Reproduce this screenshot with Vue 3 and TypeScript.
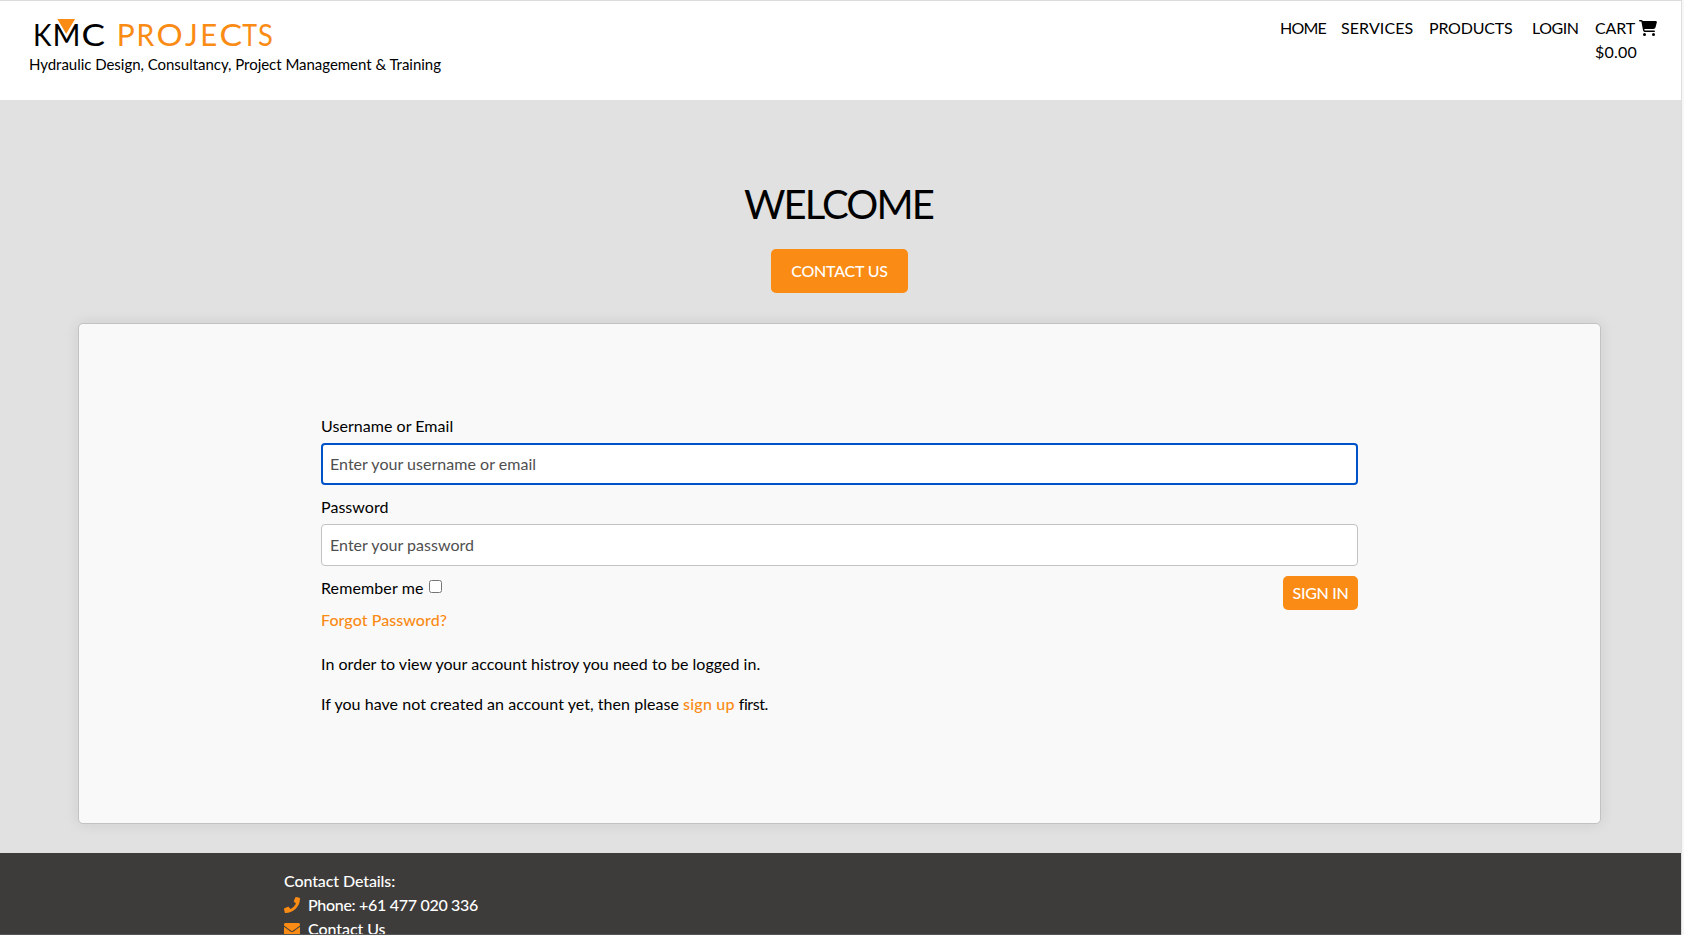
<script setup lang="ts">
import { ref } from 'vue'

interface NavItem {
  label: string
  cls: string
}

interface LogoLetter {
  char: string
  x: number
  width: number
  tone: 'dark' | 'accent'
}

const navItems: NavItem[] = [
  { label: 'HOME', cls: 'home' },
  { label: 'SERVICES', cls: 'services' },
  { label: 'PRODUCTS', cls: 'products' },
  { label: 'LOGIN', cls: 'login' },
]

const logoLetters: LogoLetter[] = [
  { char: 'K', x: 3.9, width: 18.5, tone: 'dark' },
  { char: 'M', x: 23.4, width: 28, tone: 'dark' },
  { char: 'C', x: 52.4, width: 23.5, tone: 'dark' },
  { char: 'P', x: 87.8, width: 18, tone: 'accent' },
  { char: 'R', x: 107.6, width: 17.8, tone: 'accent' },
  { char: 'O', x: 127.6, width: 26.2, tone: 'accent' },
  { char: 'J', x: 156, width: 12.8, tone: 'accent' },
  { char: 'E', x: 171.3, width: 17, tone: 'accent' },
  { char: 'C', x: 190.6, width: 22.600, tone: 'accent' },
  { char: 'T', x: 213.3, width: 14.800, tone: 'accent' },
  { char: 'S', x: 229, width: 14.800, tone: 'accent' },
]

const username = ref('')
const password = ref('')
const remember = ref(false)
</script>

<template>
  <div class="page">
    <header class="header">
      <div class="brand">
        <svg class="logo" width="250" height="34" viewBox="0 0 250 34">
          <text
            v-for="(l, i) in logoLetters"
            :key="i"
            class="logo-text"
            :class="l.tone"
            :x="l.x"
            y="29"
            :textLength="l.width"
            lengthAdjust="spacingAndGlyphs"
          >{{ l.char }}</text>
          <path class="marker" d="M26.900 1.200h20.600L37.200 18.500z" />
        </svg>
        <div class="tagline">Hydraulic Design, Consultancy, Project Management &amp; Training</div>
      </div>
      <nav class="nav">
        <a v-for="item in navItems" :key="item.label" :class="item.cls">{{ item.label }}</a>
        <a class="cart">
          <span class="cart-row">
            <span class="cart-label">CART</span>
            <svg class="cart-icon" viewBox="0 0 576 512" width="18" height="16">
              <path d="M0 24C0 10.700 10.700 0 24 0H69.500c22 0 41.500 12.800 50.600 32h411c26.300 0 45.500 25 38.600 50.400l-41 152.300c-8.500 31.400-37 53.300-69.500 53.300H170.700l5.400 28.500c2.200 11.300 12.100 19.500 23.600 19.500H488c13.300 0 24 10.700 24 24s-10.700 24-24 24H199.700c-34.600 0-64.300-24.600-70.700-58.500L77.400 54.500c-.7-3.800-4-6.500-7.900-6.500H24C10.700 48 0 37.300 0 24zM128 464a48 48 0 1 1 96 0 48 48 0 1 1-96 0zm336-48a48 48 0 1 1 0 96 48 48 0 1 1 0-96z" />
            </svg>
          </span>
          <span>$0.00</span>
        </a>
      </nav>
    </header>

    <main class="main">
      <h1>WELCOME</h1>
      <button class="btn contact" type="button">CONTACT US</button>

      <section class="card">
        <form class="form" @submit.prevent>
          <label class="label" for="username">Username or Email</label>
          <input id="username" v-model="username" class="input active" type="text" placeholder="Enter your username or email" />
          <label class="label" for="password">Password</label>
          <input id="password" v-model="password" class="input" type="password" placeholder="Enter your password" />
          <div class="actions">
            <div>
              <label class="remember">
                <span>Remember me</span>
                <input v-model="remember" type="checkbox" class="check" />
              </label>
              <a class="link forgot">Forgot Password?</a>
            </div>
            <button class="btn signin" type="submit">SIGN IN</button>
          </div>
          <p class="note">In order to view your account histroy you need to be logged in.</p>
          <p class="note second">If you have not created an account yet, then please <a class="link signup">sign up</a> <span class="tail">first.</span></p>
        </form>
      </section>
    </main>

    <footer class="footer">
      <div class="details">Contact Details:</div>
      <div class="row">
        <svg width="16" height="16" viewBox="0 0 512 512">
          <path d="M493.400 24.600l-104-24c-11.300-2.600-22.900 3.300-27.500 13.900l-48 112c-4.200 9.800-1.400 21.300 6.900 28l60.600 49.600c-36 76.700-98.900 140.500-177.200 177.200l-49.600-60.600c-6.800-8.300-18.200-11.100-28-6.900l-112 48C3.900 366.500-2 378.100.6 389.400l24 104C27.100 504.200 36.700 512 48 512c256.100 0 464-207.500 464-464 0-11.200-7.700-20.900-18.600-23.400z" />
        </svg>
        <span class="phone">Phone: +61 477 020 336</span>
      </div>
      <div class="row">
        <svg width="16" height="16" viewBox="0 0 512 512">
          <path d="M502.300 190.800c3.900-3.100 9.700-.2 9.700 4.700V400c0 26.500-21.500 48-48 48H48c-26.500 0-48-21.500-48-48V195.600c0-5 5.700-7.800 9.700-4.700 22.400 17.400 52.100 39.500 154.100 113.600 21.100 15.400 56.700 47.800 92.200 47.600 35.700.3 72-32.800 92.300-47.600 102-74.100 131.600-96.300 154-113.700zM256 320c23.200.4 56.600-29.200 73.400-41.400 132.700-96.300 142.800-104.700 173.400-128.700 5.800-4.500 9.200-11.500 9.200-18.900v-19c0-26.500-21.500-48-48-48H48c-26.500 0-48 21.500-48 48v19c0 7.400 3.400 14.300 9.200 18.900 30.600 23.900 40.700 32.400 173.400 128.700 16.800 12.200 50.200 41.800 73.400 41.400z" />
        </svg>
        <span class="contact-link">Contact Us</span>
      </div>
    </footer>
  </div>
</template>

<style>
body {
  overflow: hidden;
  background: #f7f7f7;
}
</style>

<style scoped>
.page {
  box-sizing: border-box;
  display: flex;
  flex-direction: column;
  width: 1682px;
  height: 935px;
  overflow: hidden;
  border-top: 1px solid #dcdcdc;
  border-right: 1px solid #dedede;
  background: #e1e1e1;
  color: #000;
  font: 400 16px/24px Lato, "Liberation Sans", sans-serif;
}

.header {
  display: flex;
  justify-content: space-between;
  flex: none;
  box-sizing: border-box;
  height: 99px;
  padding: 16px 24px 0 29px;
  background: #fff;
}

.brand {
  display: flex;
  flex-direction: column;
}

.logo {
  display: block;
  overflow: visible;
}

.logo-text {
  font-family: Lato, sans-serif;
  font-size: 31px;
  font-weight: 400;
}

.dark {
  fill: #000;
}

.accent {
  fill: #fa8b14;
}

.marker {
  fill: #fa8b14;
  stroke: #fff;
  stroke-width: 1.6px;
}

.tagline {
  margin-top: 1px;
  font-size: 15px;
  letter-spacing: -0.03px;
}

.nav {
  display: flex;
  align-items: flex-start;
  margin-top: -1px;
}

.home {
  width: 61px;
  letter-spacing: -0.78px;
}

.services {
  width: 88px;
  letter-spacing: 0.1px;
}

.products {
  width: 103px;
  letter-spacing: -0.2px;
}

.login {
  width: 63px;
  letter-spacing: -0.45px;
}

.cart {
  display: flex;
  flex-direction: column;
  letter-spacing: 0.2px;
}

.cart-row {
  display: flex;
  gap: 4px;
}

.cart-label {
  letter-spacing: -0.15px;
}

.cart-icon {
  margin-top: 4px;
}

.main {
  display: flex;
  flex: none;
  flex-direction: column;
  align-items: center;
  box-sizing: border-box;
  height: 753px;
  padding: 80px 80px 0 78px;
}

h1 {
  margin: 0 2px 21px 0;
  font-size: 40px;
  font-weight: 400;
  line-height: 48px;
  letter-spacing: -1.85px;
}

.btn {
  border: 0;
  border-radius: 5px;
  background: #fa8b14;
  color: #fff;
  font: inherit;
  font-weight: 500;
}

.contact {
  width: 137px;
  height: 44px;
  padding: 0;
  letter-spacing: -0.22px;
}

.card {
  box-sizing: border-box;
  width: 100%;
  height: 501px;
  margin-top: 30px;
  padding: 90px 242px 0;
  border: 1px solid #c2c2c2;
  border-radius: 5px;
  background: #f9f9f9;
  box-shadow: 0 0 15px rgba(0, 0, 0, 0.09);
}

.form {
  display: flex;
  flex-direction: column;
}

.label {
  margin-bottom: 5px;
  letter-spacing: 0.04px;
}

.input {
  box-sizing: border-box;
  width: 100%;
  height: 42px;
  margin: 0 0 10px;
  padding: 0 8px 2px;
  border: 1px solid #c2c2c2;
  border-radius: 4px;
  outline: none;
  background: #fff;
  color: #000;
  font: inherit;
  letter-spacing: 0.03px;
}

.input.active {
  padding: 0 7px 2px;
  border: 2px solid #0052c8;
}

.input::placeholder {
  color: #4f4f4f;
  opacity: 1;
}

.actions {
  display: flex;
  align-items: flex-start;
  justify-content: space-between;
}

.remember {
  display: flex;
  margin-bottom: 8px;
  letter-spacing: 0.11px;
}

.check {
  width: 13px;
  height: 13px;
  margin: 4px 0 0 5px;
}

.link {
  color: #fa8b14;
  font-weight: 500;
}

.forgot {
  letter-spacing: 0.07px;
}

.signin {
  width: 75px;
  height: 34px;
  padding: 0;
  letter-spacing: -0.28px;
}

.note {
  margin: 20px 0 0;
  letter-spacing: 0.035px;
}

.note.second {
  margin-top: 16px;
  letter-spacing: 0.045px;
}

.signup {
  letter-spacing: 0.2px;
}

.tail {
  letter-spacing: -0.45px;
}

.footer {
  flex: 1;
  box-sizing: border-box;
  padding: 16px 284px 0;
  overflow: hidden;
  border-bottom: 1px solid #555657;
  background: #3e3c3a;
  color: #fff;
  font-weight: 500;
}

.details {
  letter-spacing: -0.1px;
}

.row {
  display: flex;
  gap: 8px;
}

.row svg {
  margin-top: 4px;
  fill: #fa8b14;
}

.phone {
  letter-spacing: -0.3px;
}

.contact-link {
  letter-spacing: -0.06px;
}
</style>
